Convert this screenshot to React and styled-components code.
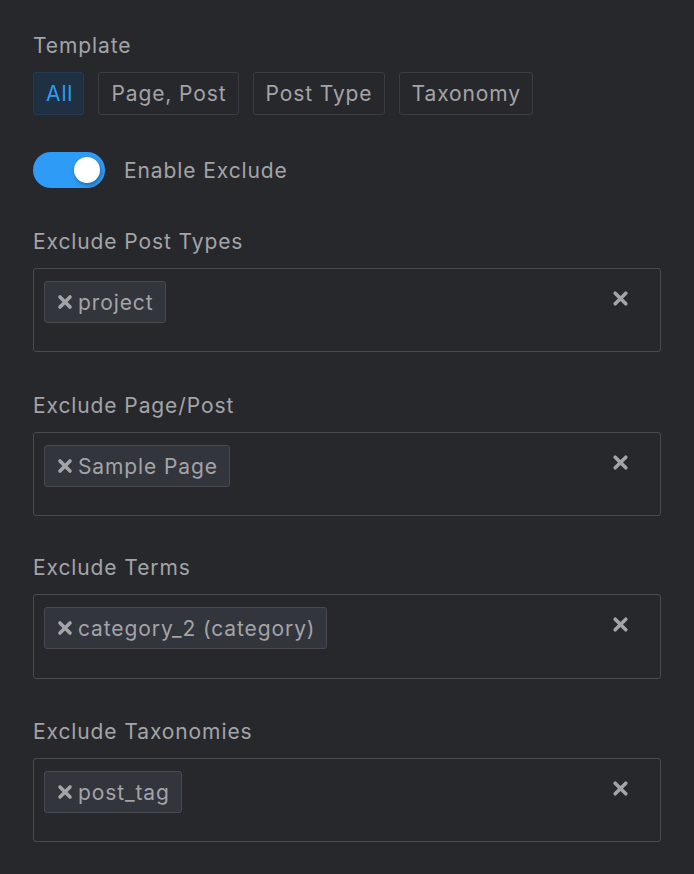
import { useState } from 'react'
import styled, { createGlobalStyle } from 'styled-components'


const GlobalStyle = createGlobalStyle`
    html, body {
        margin: 0;
        background: #27282c;
    }
    body {
        font-family: Inter, "Noto Sans", "Liberation Sans", sans-serif;
        color: #a3a4a8;
        letter-spacing: 0.9px;
    }
`

const Panel = styled.div`
    display: flex;
    flex-direction: column;
    padding: 33px 33px 32px 33px;
    min-height: 874px;
    box-sizing: border-box;
    background: #27282c;
`

const Field = styled.div`
    display: flex;
    flex-direction: column;
    margin-top: ${ ( { $gap } ) => $gap || 0 }px;
`

const Label = styled.div`
    font-size: 21px;
    line-height: 26px;
    color: #a3a4a8;
    margin-bottom: 13px;
`

const Segments = styled.div`
    display: flex;
    gap: 14px;
`

const Segment = styled.button`
    height: 43px;
    padding: 0 11px 0 12px;
    font-family: inherit;
    font-size: 21px;
    letter-spacing: inherit;
    border-radius: 3px;
    border: 1px solid ${ ( { $active } ) => $active ? `#233a52` : `#3b3d43` };
    background: ${ ( { $active } ) => $active ? `#1f3042` : `transparent` };
    color: ${ ( { $active } ) => $active ? `#2f9bf2` : `#a3a4a8` };
    cursor: pointer;

    &:first-child {
        padding: 0 10px 0 12px;
    }
`

const ToggleRow = styled.label`
    display: flex;
    align-items: center;
    gap: 19px;
    margin-top: 37px;
    font-size: 21px;
    color: #a3a4a8;
    cursor: pointer;
`

const Track = styled.span`
    position: relative;
    width: 72px;
    height: 36px;
    border-radius: 18px;
    background: ${ ( { $on } ) => $on ? `#2e9cf7` : `#4a4c52` };
    flex-shrink: 0;
    transition: background 0.2s ease;
`

const Knob = styled.span`
    position: absolute;
    top: 5px;
    left: ${ ( { $on } ) => $on ? `41px` : `5px` };
    width: 26px;
    height: 26px;
    border-radius: 50%;
    background: #ffffff;
    box-shadow: 1px 2px 4px rgba(0, 0, 0, 0.35);
    transition: left 0.2s ease;
`

const SelectBox = styled.div`
    position: relative;
    display: flex;
    align-items: flex-start;
    flex-wrap: wrap;
    height: ${ ( { $height } ) => $height }px;
    box-sizing: border-box;
    padding: 12px 60px 12px 10px;
    border: 1px solid #4a4b50;
    border-radius: 3px;
`

const Tag = styled.span`
    display: inline-flex;
    align-items: center;
    gap: 5px;
    height: 42px;
    box-sizing: border-box;
    padding: 0 11px 0 12px;
    border: 1px solid #474a51;
    border-radius: 3px;
    background: #32353c;
    font-size: 21px;
    color: #a3a4a8;
`

const ClearButton = styled.span`
    position: absolute;
    top: 21px;
    right: 31px;
    display: flex;
    color: #a3a4a8;
    cursor: pointer;
`


function Cross( { size, weight } ) {
    return <svg width={ size } height={ size } viewBox="0 0 16 16">
        <path d="M3 3 L13 13 M13 3 L3 13" stroke="currentColor" strokeWidth={ weight } strokeLinecap="round" />
    </svg>
}

const FIELDS = [
    { label: `Exclude Post Types`, tag: `project`, gap: 41, height: 84 },
    { label: `Exclude Page/Post`, tag: `Sample Page`, gap: 41, height: 84 },
    { label: `Exclude Terms`, tag: `category_2 (category)`, gap: 39, height: 85 },
    { label: `Exclude Taxonomies`, tag: `post_tag`, gap: 40, height: 84 },
]

const TEMPLATES = [ `All`, `Page, Post`, `Post Type`, `Taxonomy` ]


export default function App() {

    const [ template, set_template ] = useState( `All` )
    const [ enabled, set_enabled ] = useState( true )

    return <Panel>
        <GlobalStyle />
        <Field>
            <Label>Template</Label>
            <Segments>
                { TEMPLATES.map( name => <Segment
                    key={ name }
                    $active={ template === name }
                    onClick={ () => set_template( name ) }
                >{ name }</Segment> ) }
            </Segments>
        </Field>

        <ToggleRow onClick={ () => set_enabled( !enabled ) }>
            <Track $on={ enabled }><Knob $on={ enabled } /></Track>
            Enable Exclude
        </ToggleRow>

        { FIELDS.map( ( { label, tag, gap, height } ) => <Field key={ label } $gap={ gap }>
            <Label>{ label }</Label>
            <SelectBox $height={ height }>
                <Tag><Cross size={ 16 } weight={ 3.6 } />{ tag }</Tag>
                <ClearButton><Cross size={ 17 } weight={ 3.4 } /></ClearButton>
            </SelectBox>
        </Field> ) }
    </Panel>

}
